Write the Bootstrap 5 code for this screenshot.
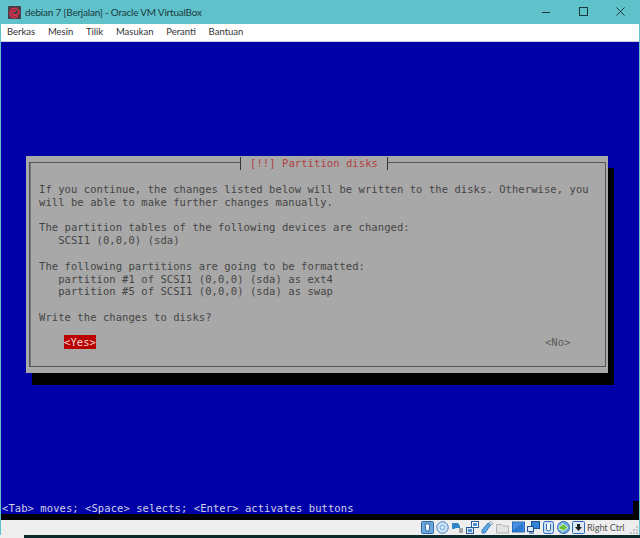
<!DOCTYPE html>
<html><head><meta charset="utf-8">
<link href="https://cdn.jsdelivr.net/npm/bootstrap@5.3.0/dist/css/bootstrap.min.css" rel="stylesheet">
<style>
html,body{height:538px;overflow:hidden;margin:0;background:#eeeeee}
.vm-win{width:640px;height:535px;font-family:Lato,"Noto Sans",sans-serif;border-left:1px solid #5fc2cb;border-right:1px solid #5fc2cb;background:#5fc2cb}
.vm-title{height:24px;background:#5fc2cb;color:#1c3a3e;font-size:10px;letter-spacing:-.22px;padding-left:7px;flex:none}
.vm-logo{width:13px;height:13px;margin-right:4px;flex:none}
.vm-ctrl{margin-left:auto;gap:17px;padding-right:8px}
.vm-menu{height:18px;background:#fff;color:#333;font-size:9.5px;padding-left:6px;gap:12.7px;border-bottom:1px solid #c9d0d6;flex:none}
.vm-screen{background:#0000a8;height:472px;flex:none;padding-top:114px;font-family:"DejaVu Sans Mono",monospace;font-size:10.5px;letter-spacing:.07px;line-height:12.8px;color:#454545}
.tty-dlg{margin-left:25px;width:582px;height:217px;background:#a8a8a8;box-shadow:6px 12px 0 #000;padding:6px 2px 6px 3px}
.tty-frame{position:relative;height:100%;border:1px solid #555;padding:20px 8px 0 9px;box-shadow:inset 1px 0 0 #777}
.tty-ttl{position:absolute;left:210px;top:-6px;width:148px;height:13px;background:#a8a8a8;border-left:1px solid #333;border-right:1px solid #333;color:#b04040;text-align:center;line-height:13px;white-space:pre}
.tty-txt{height:140px;white-space:pre}
.tty-row{white-space:pre;margin-top:13px}
.tty-yes{background:#b80000;color:#f0d8d8;padding:1px 0;margin-left:25px}
.tty-no{color:#5a5a5a;margin-left:449px}
.tty-foot{margin-top:128px;height:13px}
.tty-hint{padding:2px 0 0 1px;color:#d0d0e8;line-height:11px;white-space:pre}
.tty-notch{width:6px;background:#000}
.vm-black{background:#000;height:6px;flex:none}
.vm-status{height:15px;background:#eeeeee;color:#555;font-size:9.2px;letter-spacing:-.1px;padding-left:420px;flex:none}
.vm-status svg{width:13px;height:13px;flex:none;margin-right:2.1px}
.vm-host{margin-left:0;white-space:nowrap}
.vm-status .vm-grip{margin-left:auto;width:10px;height:10px;margin-right:0;margin-top:4px}
.vm-bot{height:3px;background:#0a2a2c;margin-left:24px}
</style></head><body>
<div class="vm-win d-flex flex-column">
<div class="vm-title d-flex align-items-center">
<svg class="vm-logo" viewBox="0 0 13 13"><rect width="13" height="13" rx="1" fill="#4a3b48"/><path d="M9.8 10.2A4.6 4.6 0 1 1 10.8 5.2A3.5 3.5 0 0 1 4 6.8A2.3 2.3 0 0 1 8 5.6" fill="none" stroke="#e5304a" stroke-width="1.5"/></svg>
<span>debian 7 [Berjalan] - Oracle VM VirtualBox</span>
<div class="vm-ctrl d-flex align-items-center">
<svg width="20" height="12" viewBox="0 0 20 12"><path d="M5 6.5h8" stroke="#1c3a3e"/></svg>
<svg width="20" height="12" viewBox="0 0 20 12"><rect x="5.500" y="1.500" width="8" height="8" fill="none" stroke="#1c3a3e"/></svg>
<svg width="20" height="12" viewBox="0 0 20 12"><path d="M5.500 1.500l8 8M13.500 1.500l-8 8" stroke="#1c3a3e" fill="none"/></svg>
</div></div>
<div class="vm-menu d-flex align-items-center"><span>Berkas</span><span>Mesin</span><span>Tilik</span><span>Masukan</span><span>Peranti</span><span>Bantuan</span></div>
<div class="vm-screen">
<div class="tty-dlg"><div class="tty-frame">
<div class="tty-ttl">[!!] Partition disks</div>
<div class="tty-txt">If you continue, the changes listed below will be written to the disks. Otherwise, you
will be able to make further changes manually.

The partition tables of the following devices are changed:
   SCSI1 (0,0,0) (sda)

The following partitions are going to be formatted:
   partition #1 of SCSI1 (0,0,0) (sda) as ext4
   partition #5 of SCSI1 (0,0,0) (sda) as swap

Write the changes to disks?</div>
<div class="tty-row"><span class="tty-yes">&lt;Yes&gt;</span><span class="tty-no">&lt;No&gt;</span></div>
</div></div>
<div class="tty-foot d-flex justify-content-between"><div class="tty-hint">&lt;Tab&gt; moves; &lt;Space&gt; selects; &lt;Enter&gt; activates buttons</div><div class="tty-notch"></div></div>
</div>
<div class="vm-black"></div>
<div class="vm-status d-flex align-items-center">
<svg viewBox="0 0 13 13"><rect x=".5" y=".5" width="12" height="12" rx="1" fill="#6fa8dc" stroke="#2a6aa8"/><path d="M4 3h5l-1 7H5z" fill="#fff" stroke="#2a6aa8"/></svg>
<svg viewBox="0 0 13 13"><circle cx="6.5" cy="6.5" r="5.7" fill="#d8e8f6" stroke="#3a7fc0"/><circle cx="6.5" cy="6.5" r="3" fill="#8cc0ea"/><circle cx="6.5" cy="6.5" r="1.2" fill="#fff"/></svg>
<svg viewBox="0 0 13 13"><path d="M1 2h3l3 0 2 3v2H5L3 8H1z" fill="#2f86c8"/><path d="M8 7h4v5H8z" fill="#a8a8a8"/></svg>
<svg viewBox="0 0 13 13"><rect x="5.5" y=".5" width="7" height="6" fill="#fff" stroke="#2a5a98"/><rect x=".5" y="6.5" width="7" height="6" fill="#dce8f6" stroke="#2a5a98"/><rect x="7" y="2" width="4" height="3" fill="#4a90d8"/><rect x="2" y="8" width="4" height="3" fill="#4a90d8"/></svg>
<svg viewBox="0 0 13 13"><path d="M1 12V9l6-7 2.5 2-5.5 8z" fill="#5aa8e8" stroke="#2a6aa8" stroke-width=".8"/><path d="M8 1.5l2-1 2 2-1 2z" fill="#d8e4f0" stroke="#7a8a9a" stroke-width=".6"/></svg>
<svg viewBox="0 0 13 13"><path d="M.5 3.5h5l1 1.5h6v7H.5z" fill="#e4e4e4" stroke="#b4b4b4"/></svg>
<svg viewBox="0 0 13 13"><rect x=".5" y="1" width="12" height="10" fill="#4a90e2" stroke="#2a6ab8"/><path d="M1 9L11 2v9H1z" fill="#2a78d0"/><path d="M0 11.5h13" stroke="#90a8c0"/></svg>
<svg viewBox="0 0 13 13"><rect x="4.5" y=".5" width="8" height="7" fill="#2f86d8" stroke="#1c4f90"/><rect x=".5" y="5.5" width="6" height="5" fill="#dce8f6" stroke="#1c4f90"/><path d="M2 12h5" stroke="#1c4f90"/></svg>
<svg viewBox="0 0 13 13"><rect x="1.5" y=".5" width="10" height="12" rx="2" fill="#cfe0f4" stroke="#2a6ab8"/><path d="M4.5 3v5a2 2 0 0 0 4 0V3" fill="#fff" stroke="#2a6ab8"/></svg>
<svg viewBox="0 0 13 13"><circle cx="6.5" cy="6.5" r="6" fill="#6aa8e0" stroke="#2a6ab8"/><path d="M5 2l6 4.5-6 4.5V8.500H2v-4h3z" fill="#68c23a" stroke="#fff" stroke-width=".7"/></svg>
<svg viewBox="0 0 13 13"><rect x=".5" y=".5" width="12" height="12" rx="1" fill="#dce8f6" stroke="#2a6ab8"/><path d="M5 3h3v3h2l-3.500 4L3 6h2z" fill="#222"/></svg>
<span class="vm-host">Right Ctrl</span>
<svg class="vm-grip" viewBox="0 0 10 10"><path d="M7 1h2v2H7zM4 4h2v2H4zM7 4h2v2H7zM1 7h2v2H1zM4 7h2v2H4zM7 7h2v2H7z" fill="#c4c4c4"/></svg>
</div>
</div>
<div class="vm-bot"></div>
</body></html>
